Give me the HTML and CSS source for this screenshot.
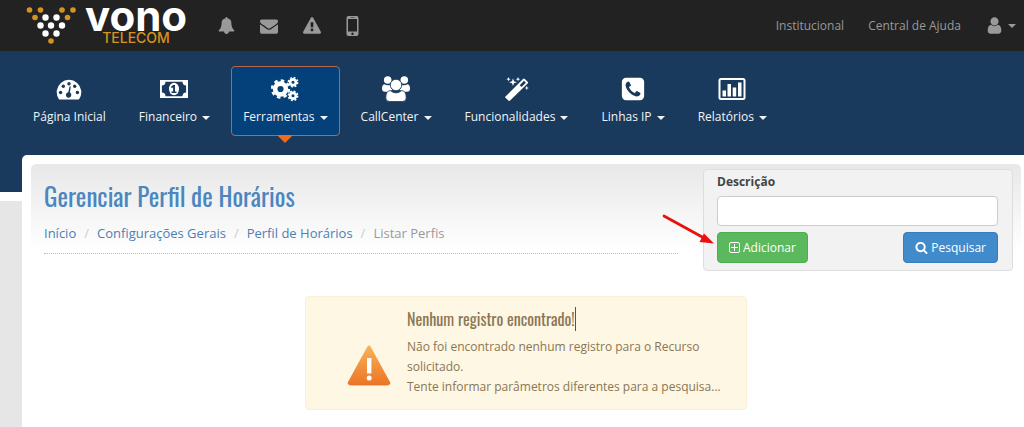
FILE: index.html
```html
<!DOCTYPE html>
<html lang="pt-BR">
<head>
    <meta charset="UTF-8">
    <meta name="viewport" content="width=device-width, initial-scale=1.0">
    <title>Gerenciar Perfil de Horários</title>
    <link rel="stylesheet" href="styles.css">
</head>
<body>
    <header class="topbar">
        <a class="logo" href="#">
            <svg class="logo-mark" width="50" height="42" viewBox="0 0 50 42">
                <g fill="#d8921f">
                    <circle cx="3.500" cy="5" r="2.800"/><circle cx="14.500" cy="5" r="2.800"/>
                    <circle cx="36" cy="5" r="2.800"/><circle cx="47" cy="5" r="2.800"/>
                    <circle cx="9" cy="12.500" r="2.800"/><circle cx="41.500" cy="12.500" r="2.800"/>
                    <circle cx="25" cy="36" r="2.800"/>
                </g>
                <g fill="#fff">
                    <circle cx="19.500" cy="12.500" r="3.200"/><circle cx="30.500" cy="12.500" r="3.200"/>
                    <circle cx="14.500" cy="20.500" r="3.200"/><circle cx="25" cy="20.500" r="3.200"/><circle cx="36" cy="20.500" r="3.200"/>
                    <circle cx="19.500" cy="28.500" r="3.200"/><circle cx="30.500" cy="28.500" r="3.200"/>
                </g>
            </svg>
            <span class="logo-text">
                <span class="logo-name">vono</span>
                <span class="logo-sub">TELECOM</span>
            </span>
        </a>
        <nav class="shortcuts">
            <a href="#" aria-label="Notificações"><svg width="17" height="17" viewBox="0 0 1792 1792"><path d="M1728 1408q0 52-38 90t-90 38h-448q0 106-75 181t-181 75-181-75-75-181h-448q-52 0-90-38t-38-90q50-42 91-88t85-119.500 74.500-158.500 50-206 19.500-260q0-152 117-282.500t307-158.500q-8-19-8-39 0-40 28-68t68-28 68 28 28 68q0 20-8 39 190 28 307 158.500t117 282.500q0 139 19.500 260t50 206 74.500 158.500 85 119.500 91 88z"/></svg></a>
            <a href="#" aria-label="Mensagens"><svg width="18" height="18" viewBox="0 0 1792 1792"><path d="M1792 710v794q0 66-47 113t-113 47h-1472q-66 0-113-47t-47-113v-794q44 49 101 87 362 246 497 345 57 42 92.500 65.500t94.500 48 110 24.500h2q51 0 110-24.500t94.500-48 92.500-65.500q170-123 498-345 57-39 100-87zm0-294q0 79-49 151t-122 123q-376 261-468 325-10 7-42.500 31t-54 38.500-52 32.500-57.500 27-50 9h-2q-23 0-50-9t-57.500-27-52-32.500-54-38.500-42.500-31q-91-64-262-182.500t-205-142.500q-62-42-117-115.500t-55-136.500q0-78 41.500-130t118.500-52h1472q65 0 112.500 47t47.500 113z"/></svg></a>
            <a href="#" aria-label="Alertas"><svg width="18" height="18" viewBox="0 0 1792 1792"><path d="M1024 1375v-190q0-14-9.500-23.500t-22.500-9.500h-192q-13 0-22.500 9.500t-9.500 23.500v190q0 14 9.500 23.500t22.500 9.500h192q13 0 22.500-9.500t9.500-23.500zm-2-374l18-459q0-12-10-19-13-11-24-11h-220q-11 0-24 11-10 7-10 21l17 457q0 10 10 16.500t24 6.500h185q14 0 23.500-6.500t10.500-16.500zm-14-934l768 1408q35 63-2 126-17 29-46.500 46t-63.500 17h-1536q-34 0-63.500-17t-46.500-46q-37-63-2-126l768-1408q17-31 47-49t65-18 65 18 47 49z"/></svg></a>
            <a href="#" aria-label="Celular"><svg width="13" height="20" viewBox="0 0 13 20"><path fill-rule="evenodd" d="M2.500 0h8a2 2 0 0 1 2 2v16a2 2 0 0 1-2 2h-8a2 2 0 0 1-2-2v-16a2 2 0 0 1 2-2zM2 3v12.500h9v-12.500zM4.500 1.200v.600h4v-.600zM6.500 16.600a1.200 1.200 0 1 0 .01 0z"/></svg></a>
        </nav>
        <nav class="account">
            <a href="#">Institucional</a>
            <a href="#">Central de Ajuda</a>
            <a class="user" href="#" aria-label="Minha conta">
                <svg width="19" height="19" viewBox="0 0 1792 1792"><path d="M1536 1399q0 109-62.500 187t-150.500 78h-854q-88 0-150.500-78t-62.500-187q0-85 8.500-160.500t31.500-152 58.500-131 94-89 134.500-34.500q131 128 313 128t313-128q76 0 134.500 34.500t94 89 58.500 131 31.500 152 8.500 160.500zm-256-887q0 159-112.500 271.500t-271.500 112.500-271.500-112.500-112.500-271.500 112.500-271.500 271.500-112.500 271.500 112.500 112.500 271.500z"/></svg>
                <span class="caret"></span>
            </a>
        </nav>
    </header>

    <nav class="menu">
        <a class="item" href="#">
            <svg width="26" height="24" viewBox="0 0 26 24"><path fill="#fff" d="M2.800 22a12.300 12.300 0 1 1 20.400 0q-.400.500-1 .500h-18.400q-.600 0-1-.500z"/><g fill="#193a5c"><circle cx="4.600" cy="15.500" r="1.700"/><circle cx="7.300" cy="9.300" r="1.700"/><circle cx="13" cy="6.700" r="1.700"/><circle cx="18.700" cy="9.300" r="1.700"/><circle cx="21.400" cy="15.500" r="1.700"/><path d="M14.800 9.500l-.900 6.100a2.700 2.700 0 1 1-1.700-.300l1.500-6z"/></g></svg>
            <span>Página Inicial</span>
        </a>
        <a class="item" href="#">
            <svg width="28" height="24" viewBox="0 0 28 24"><path fill="#fff" d="M0 3h28v18h-28z"/><path fill="#193a5c" d="M5.500 4.800h17a3.600 3.600 0 0 0 3.600 3.600v7.200a3.600 3.600 0 0 0-3.600 3.600h-17a3.600 3.600 0 0 0-3.600-3.600v-7.200a3.600 3.600 0 0 0 3.600-3.600z"/><ellipse cx="14" cy="12" rx="5" ry="6.200" fill="#fff"/><path fill="#193a5c" d="M13 8h2v6.500h1.500v1.500h-5v-1.500h1.600v-4.200l-1.300.900-.900-1.200z"/></svg>
            <span>Financeiro <i class="caret"></i></span>
        </a>
        <a class="item active" href="#">
            <svg width="28" height="24" viewBox="0 0 28 24" fill="none" stroke="#fff"><circle cx="9.500" cy="12" r="5.400" stroke-width="4.600"/><circle cx="9.500" cy="12" r="8.500" stroke-width="2.400" stroke-dasharray="3.500 3.176"/><g stroke-width="2.700"><circle cx="22" cy="5.200" r="2.900"/><circle cx="22" cy="18.800" r="2.900"/></g><g stroke-width="1.500" stroke-dasharray="1.900 1.798"><circle cx="22" cy="5.200" r="4.700"/><circle cx="22" cy="18.800" r="4.700"/></g></svg>
            <span>Ferramentas <i class="caret"></i></span>
        </a>
        <a class="item" href="#">
            <svg width="28" height="26" viewBox="0 0 28 26" fill="#fff"><circle cx="5.700" cy="4" r="3.800"/><circle cx="22.300" cy="4" r="3.800"/><path d="M2.300 8.200q3.400 2 6.300.500-.300 3.500 2 5.300-2.500.100-4 1.800h-3.500q-3.100 0-3.100-3 0-4 2.300-4.600zM25.700 8.200q-3.400 2-6.300.500.300 3.500-2 5.300 2.500.100 4 1.800h3.500q3.100 0 3.100-3 0-4-2.300-4.600z"/><g stroke="#193a5c" stroke-width=".8"><circle cx="14" cy="9" r="5.700"/><path d="M8.200 14.600q2.800 2.300 5.800 2.300t5.800-2.300q4.400.200 4.400 7.400 0 3.500-3.700 3.500h-13q-3.700 0-3.700-3.500 0-7.200 4.400-7.400z"/></g></svg>
            <span>CallCenter <i class="caret"></i></span>
        </a>
        <a class="item" href="#">
            <svg width="26" height="24" viewBox="0 0 26 24"><path fill="#fff" d="M1.500 19.500l17.500-17.500q.900-.900 1.800 0l2.800 2.800q.900.900 0 1.800l-17.500 17q-.900.900-1.800 0l-2.800-2.800q-.800-.600 0-1.300z"/><path fill="#193a5c" d="M15.800 8.200l4.200-4.400 1.900 1.900-4.400 4.200z"/><path fill="#fff" d="M4.500 0l.600 1.600 1.600.600-1.600.600-.600 1.600-.600-1.600-1.600-.600 1.600-.600zM9 1.300l1 2.900 2.900 1-2.900 1-1 2.900-1-2.900-2.900-1 2.900-1zM14 0l.600 1.600 1.600.600-1.600.600-.600 1.600-.600-1.600-1.600-.600 1.600-.600zM22.800 8.800l.600 1.600 1.600.600-1.600.600-.600 1.600-.600-1.600-1.600-.600 1.600-.600z"/></svg>
            <span>Funcionalidades <i class="caret"></i></span>
        </a>
        <a class="item" href="#">
            <svg width="26" height="26" viewBox="0 0 1792 1792" fill="#fff"><path d="M1408 1193q0-11-2-16t-18-16.500-40.500-25-47.500-26.500-45.500-25-28.500-15q-5-3-19-13t-25-15-21-5q-15 0-36.500 20.500t-39.500 45-38.500 45-33.500 20.500q-7 0-16.500-3.500t-15.500-6.500-17-9.500-14-8.500q-99-55-170-126.500t-127-170.500q-2-3-8.500-14t-9.500-17-6.500-15.500-3.500-16.500q0-13 20.500-33.500t45-38.500 45-39.500 20.500-36.500q0-10-5-21t-15-25-13-19q-3-6-15-28.500t-25-45.500-26.500-47.500-25-40.500-16.500-18-16-2q-48 0-101 22-46 21-80 94.500t-34 130.500q0 16 2.500 34t5 30.500 9 33 10 29.500 12.500 33 11 30q60 164 216.500 320.500t320.500 216.500q6 2 30 11t33 12.500 29.500 10 33 9 30.500 5 34 2.500q57 0 130.500-34t94.500-80q22-53 22-101zm256-777v960q0 119-84.500 203.500t-203.500 84.500h-960q-119 0-203.500-84.500t-84.500-203.500v-960q0-119 84.500-203.500t203.500-84.500h960q119 0 203.500 84.500t84.500 203.500z"/></svg>
            <span>Linhas IP <i class="caret"></i></span>
        </a>
        <a class="item" href="#">
            <svg width="28" height="24" viewBox="0 0 28 24"><rect x="1.500" y="2" width="25" height="20" rx="1.500" fill="none" stroke="#fff" stroke-width="2"/><path fill="#fff" d="M4.500 13.500h3.500v6h-3.500zM9.500 7h3.500v12.500h-3.500zM14.700 10.500h3.500v9h-3.500zM20 5.500h3.500v14h-3.500z"/></svg>
            <span>Relatórios <i class="caret"></i></span>
        </a>
    </nav>

    <main class="content">
        <section class="page-head">
            <div class="heading">
                <h1>Gerenciar Perfil de Horários</h1>
                <ol class="breadcrumb">
                    <li><a href="#">Início</a></li>
                    <li><a href="#">Configurações Gerais</a></li>
                    <li><a href="#">Perfil de Horários</a></li>
                    <li>Listar Perfis</li>
                </ol>
            </div>
            <form class="search">
                <label for="descricao">Descrição</label>
                <input id="descricao" type="text">
                <div class="buttons">
                    <button class="btn add" type="button">
                        <svg width="11" height="11" viewBox="0 0 11 11" fill="none" stroke="#fff"><rect x=".5" y=".5" width="10" height="10" rx="1.500"/><path d="M5.500 2v7M2 5.500h7"/></svg>
                        Adicionar
                    </button>
                    <button class="btn find" type="submit">
                        <svg width="13" height="13" viewBox="0 0 1792 1792" fill="#fff"><path d="M1216 832q0-185-131.500-316.500t-316.500-131.500-316.500 131.500-131.500 316.500 131.500 316.500 316.500 131.500 316.500-131.500 131.500-316.500zm512 832q0 52-38 90t-90 38q-54 0-90-38l-343-342q-179 124-399 124-143 0-273.500-55.500t-225-150-150-225-55.500-273.500 55.500-273.500 150-225 225-150 273.500-55.500 273.500 55.500 225 150 150 225 55.500 273.500q0 220-124 399l343 343q37 37 37 90z"/></svg>
                        Pesquisar
                    </button>
                </div>
                <svg class="arrow" width="54" height="32" viewBox="0 0 54 32"><path d="M3 2l40 22" stroke="#e8110f" stroke-width="2.800" stroke-linecap="round"/><path fill="#e8110f" d="M53 29.500l-14.500-1.500 4.500-8.500z"/></svg>
            </form>
        </section>

        <section class="alert">
            <svg width="44" height="42" viewBox="0 0 44 42">
                <defs><linearGradient id="orange" x1="0" y1="0" x2="0" y2="1"><stop offset="0" stop-color="#f6b45a"/><stop offset="1" stop-color="#ec7426"/></linearGradient></defs>
                <path fill="#d9c9a5" d="M2 39.500h40l-1 1.500h-38z"/>
                <path fill="url(#orange)" d="M20.300 1.800q1.700-2.600 3.400 0l19.300 35.200q.900 2.600-1.600 3h-38.800q-2.500-.400-1.600-3z"/>
                <path fill="#fff" d="M20 13h4.400v15.500h-4.400z"/><circle cx="22.200" cy="33" r="2.500" fill="#fff"/>
            </svg>
            <div class="alert-text">
                <h2>Nenhum registro encontrado!</h2>
                <p>Não foi encontrado nenhum registro para o Recurso solicitado.<br>Tente informar parâmetros diferentes para a pesquisa...</p>
            </div>
        </section>
    </main>
</body>
</html>
```

FILE: styles.css
```css
* {
    box-sizing: border-box;
}
body {
    margin: 0;
    min-height: 100vh;
    display: flex;
    flex-direction: column;
    background: #e6e6e6;
    font: 12px/20px "Open Sans", sans-serif;
    color: #444;
}
a {
    color: #4a80b5;
    text-decoration: none;
}
svg {
    display: block;
    flex: none;
}
.caret {
    display: inline-block;
    margin-left: 2px;
    vertical-align: middle;
    border-top: 4px solid;
    border-left: 4px solid transparent;
    border-right: 4px solid transparent;
}

/* top bar */
.topbar {
    height: 51px;
    padding: 0 8px 0 26px;
    display: flex;
    align-items: center;
    background: #222;
}
.topbar a {
    color: #999;
}
.topbar svg {
    fill: #999;
}
.logo {
    display: flex;
    align-items: center;
    gap: 6px;
}
.logo-text {
    width: 108px;
    padding-bottom: 3px;
    display: flex;
    flex-direction: column;
    align-items: center;
}
.logo-name {
    height: 27px;
    font: 700 42px/24px Inter, sans-serif;
    color: #fff;
}
.logo-sub {
    font: 500 14px/14px Inter, sans-serif;
    color: #d8921f;
}
.shortcuts {
    margin-left: 28px;
    display: flex;
    align-items: center;
    gap: 25px;
}
.account {
    margin-left: auto;
    display: flex;
    align-items: center;
    gap: 24px;
}
.user {
    display: flex;
    align-items: center;
    gap: 2px;
}

/* main menu */
.menu {
    padding: 15px 21px 56px;
    display: flex;
    gap: 9px;
    background: #193a5c;
    border-bottom: 9px solid #fff;
}
.item {
    position: relative;
    height: 70px;
    padding: 0 11px 8px;
    display: flex;
    flex-direction: column;
    align-items: center;
    justify-content: space-between;
    border: 1px solid transparent;
    border-radius: 4px;
    color: #f0f4f8;
    white-space: nowrap;
}
.item svg {
    height: 26px;
    margin-top: 9px;
}
.active {
    background: #04417a;
    border-color: #b5654a;
}
.active::after {
    content: "";
    position: absolute;
    top: 100%;
    left: 50%;
    margin-left: -8px;
    border-top: 8px solid #f26a1b;
    border-left: 8px solid transparent;
    border-right: 8px solid transparent;
}

/* page */
.content {
    position: relative;
    flex: 1;
    margin: -46px 0 0 22px;
    padding: 9px 3px 17px 9px;
    background: #fff;
    border-top-left-radius: 5px;
}
.page-head {
    padding: 5px 8px 0 13px;
    display: flex;
    align-items: flex-start;
    gap: 25px;
    background: linear-gradient(#e8e8e8, #fff 88px);
    border-radius: 5px;
}
.heading {
    flex: 1;
    padding: 9px 0 10px;
    border-bottom: 1px dotted #bbb;
}
h1 {
    margin: 0;
    font: 25px/36px Oswald, "Liberation Sans Narrow", sans-serif;
    color: #4a86c0;
}
.breadcrumb {
    margin: 9px 0 0;
    padding: 0;
    display: flex;
    list-style: none;
    font-size: 13px;
    color: #999;
}
.breadcrumb li + li::before {
    content: "/";
    padding: 0 8px;
    color: #ccc;
}
.search {
    position: relative;
    flex: 0 0 310px;
    height: 102px;
    padding: 2px 14px 7px 13px;
    display: flex;
    flex-direction: column;
    gap: 4px;
    background: #f2f2f2;
    border: 1px solid #ddd;
    border-radius: 4px;
}
.search label {
    font-weight: bold;
}
.search input {
    height: 31px;
    padding: 4px 8px;
    border: 1px solid #ccc;
    border-radius: 4px;
    font: inherit;
}
.buttons {
    margin-top: 2px;
    display: flex;
    justify-content: space-between;
}
.btn {
    height: 31px;
    padding: 0 11px;
    display: flex;
    align-items: center;
    gap: 3px;
    border: 1px solid;
    border-radius: 4px;
    font: inherit;
    color: #fff;
}
.add {
    background: #5cb85c;
    border-color: #4cae4c;
}
.find {
    background: #428bca;
    border-color: #357ebd;
}
.arrow {
    position: absolute;
    top: 44px;
    left: -43px;
}

/* empty result */
.alert {
    max-width: 442px;
    margin: 25px auto 0;
    padding: 10px 14px 12px 41px;
    display: flex;
    align-items: center;
    gap: 16px;
    background: #fdf7e3;
    border: 1px solid #faf0d6;
    border-radius: 4px;
    color: #8a7654;
}
.alert > svg {
    margin-top: 28px;
}
h2 {
    display: inline-block;
    margin: 0 0 6px;
    border-right: 1px solid #555;
    font: 16px/24px Oswald, "Liberation Sans Narrow", sans-serif;
}
p {
    margin: 0;
}
```
